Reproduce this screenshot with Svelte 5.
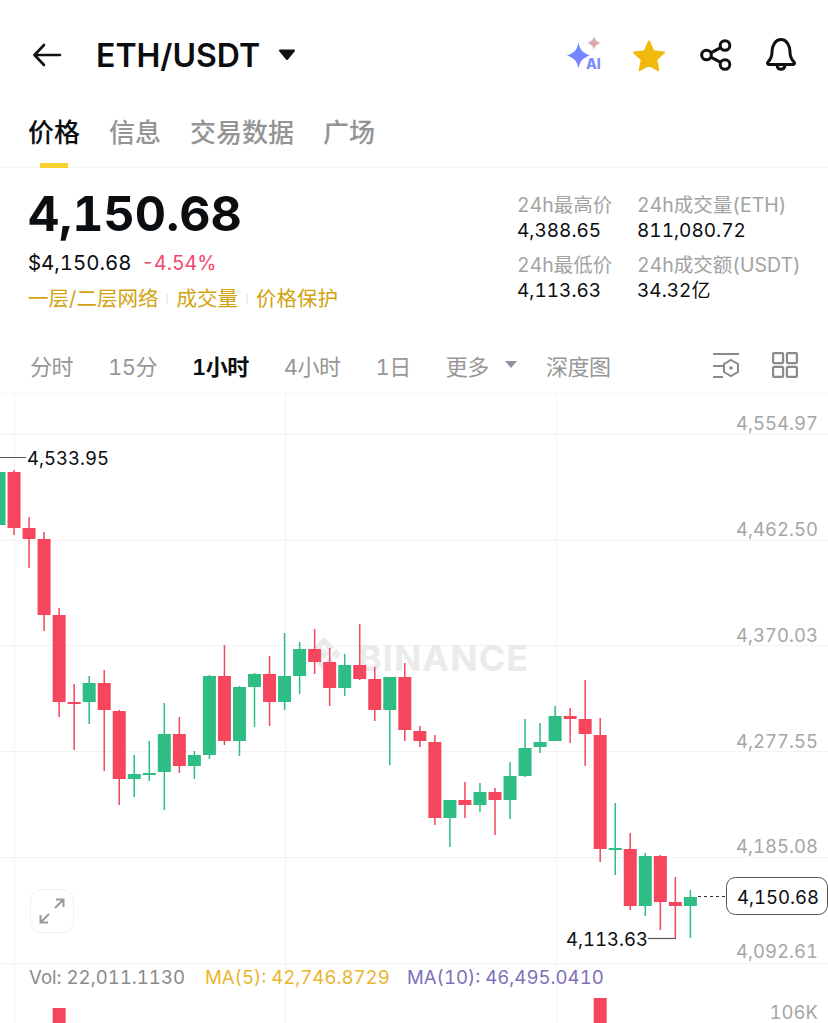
<script>
  const RED = '#f6465d'
  const GREEN = '#2ebd85'

  // [body top, body bottom, wick top, wick bottom, up?]
  const candles = [
    [472, 525, 470, 527, 1],
    [472, 528, 470, 535, 0],
    [528, 539, 517, 568, 0],
    [539, 615, 532, 631, 0],
    [615, 702, 608, 717, 0],
    [702, 704, 684, 750, 0],
    [683, 702, 676, 724, 1],
    [683, 710, 670, 771, 0],
    [711, 779, 710, 805, 0],
    [774, 779, 755, 797, 1],
    [773, 774, 741, 781, 1],
    [734, 772, 703, 810, 1],
    [734, 766, 717, 773, 0],
    [755, 766, 751, 779, 1],
    [676, 755, 675, 759, 1],
    [676, 741, 645, 745, 0],
    [687, 741, 686, 756, 1],
    [674, 687, 673, 727, 1],
    [674, 702, 656, 726, 0],
    [676, 702, 633, 710, 1],
    [649, 676, 642, 694, 1],
    [649, 662, 629, 674, 0],
    [662, 688, 648, 706, 0],
    [665, 688, 654, 696, 1],
    [665, 679, 624, 680, 0],
    [679, 710, 667, 721, 0],
    [677, 710, 677, 765, 1],
    [677, 730, 663, 741, 0],
    [731, 741, 726, 747, 0],
    [742, 818, 735, 825, 0],
    [800, 818, 800, 847, 1],
    [800, 805, 782, 818, 0],
    [792, 805, 783, 812, 1],
    [792, 800, 788, 835, 0],
    [776, 800, 762, 819, 1],
    [748, 776, 719, 777, 1],
    [742, 747, 723, 753, 1],
    [716, 741, 706, 741, 1],
    [716, 719, 708, 743, 0],
    [719, 734, 680, 766, 0],
    [735, 849, 718, 862, 0],
    [848, 849, 803, 875, 1],
    [849, 906, 833, 910, 0],
    [856, 906, 853, 916, 1],
    [856, 902, 855, 930, 0],
    [902, 906, 877, 938, 0],
    [897, 906, 890, 938, 1]
  ]

  const slot = (i) => -1 + 15.03 * i

  const gridY = [434, 540, 645, 751, 857, 963]
  const gridX = [14, 285, 556]
  const axis = [
    ['4,554.97', 430],
    ['4,462.50', 536],
    ['4,370.03', 642],
    ['4,277.55', 748],
    ['4,185.08', 853],
    ['4,092.61', 958],
    ['106K', 1019]
  ]

  const tabs = ['价格', '信息', '交易数据', '广场']
  const intervals = ['分时', '15分', '1小时', '4小时', '1日']
</script>

<div class="screen">
  <header class="topbar">
    <svg class="back" width="30" height="24" viewBox="0 0 30 24" fill="none" stroke="#111" stroke-width="2.6" stroke-linecap="round" stroke-linejoin="round">
      <path d="M28 12H3M12 2 2.500 12 12 22" />
    </svg>
    <span class="pair">ETH/USDT</span>
    <svg class="pair-caret" width="18" height="12" viewBox="0 0 18 12">
      <path d="M2 1.500h14L9 10z" fill="#111" stroke="#111" stroke-width="2" stroke-linejoin="round" />
    </svg>
    <div class="actions">
      <svg class="ai-icon" width="38" height="38" viewBox="0 0 38 38">
        <defs>
          <linearGradient id="ai-big" x1="0" y1="0" x2="1" y2="1">
            <stop offset="0" stop-color="#5f8dff" />
            <stop offset="1" stop-color="#8b7bff" />
          </linearGradient>
          <linearGradient id="ai-small" x1="0" y1="0" x2="1" y2="1">
            <stop offset="0" stop-color="#c9a6e8" />
            <stop offset="1" stop-color="#f2a77c" />
          </linearGradient>
        </defs>
        <path d="M13.500 6.500c1.500 7.500 3.800 10 11.500 13-7.700 3-10 5.500-11.500 13-1.500-7.500-3.800-10-11.500-13 7.700-3 10-5.500 11.500-13z" fill="url(#ai-big)" />
        <path d="M29 0c.8 3.800 2.200 5.400 7 7-4.800 1.600-6.200 3.200-7 7-.8-3.800-2.200-5.400-7-7 4.800-1.600 6.200-3.200 7-7z" fill="url(#ai-small)" />
        <text class="ai" x="21" y="33">AI</text>
      </svg>
      <svg class="star" width="36" height="34" viewBox="0 0 36 34">
        <path d="M18 3.500l4.400 9.800 10.600 1.200-7.800 7.200 2.100 10.500-9.300-5.300-9.300 5.300 2.100-10.500L3 14.500l10.600-1.200z" fill="#f0b90b" stroke="#f0b90b" stroke-width="2" stroke-linejoin="round" />
      </svg>
      <svg class="share" width="34" height="32" viewBox="0 0 34 32" fill="none" stroke="#111" stroke-width="3">
        <circle cx="7.500" cy="16" r="4.800" />
        <circle cx="26" cy="6.500" r="4.800" />
        <circle cx="26" cy="25.500" r="4.800" />
        <path d="M11.800 13.800 21.700 8.700M11.800 18.200l9.900 5.100" />
      </svg>
      <svg class="bell" width="32" height="36" viewBox="0 0 32 36" fill="none" stroke="#111" stroke-width="3" stroke-linejoin="round" stroke-linecap="round">
        <path d="M7 15c0-6.500 3.500-12.500 9-12.500S25 8.500 25 15c0 5 1.500 7.500 4 10 1 1 .6 2.500-1 2.500H4c-1.600 0-2-1.500-1-2.500 2.500-2.500 4-5 4-10z" />
        <path d="M12 28c.3 2.800 2 4.300 4 4.300s3.700-1.500 4-4.300" />
      </svg>
    </div>
  </header>

  <nav class="tabs">
    {#each tabs as tab, i}
      <span class="tab" class:active={i === 0}>{tab}</span>
    {/each}
  </nav>

  <section class="summary">
    <div class="price-block">
      <div class="price">4,150.68</div>
      <div class="sub">
        <span>$4,150.68</span>
        <span class="change">-4.54%</span>
      </div>
      <div class="tags">
        <span>一层/二层网络</span>
        <i></i>
        <span>成交量</span>
        <i></i>
        <span>价格保护</span>
      </div>
    </div>
    <dl class="stats">
      <div><dt>24h最高价</dt><dd>4,388.65</dd></div>
      <div><dt>24h成交量(ETH)</dt><dd>811,080.72</dd></div>
      <div><dt>24h最低价</dt><dd>4,113.63</dd></div>
      <div><dt>24h成交额(USDT)</dt><dd>34.32亿</dd></div>
    </dl>
  </section>

  <div class="intervals">
    {#each intervals as item}
      <span class:current={item === '1小时'}>{item}</span>
    {/each}
    <span class="more">更多<svg width="14" height="9" viewBox="0 0 14 9"><path d="M1 1h12L7 8z" fill="#8d949e" /></svg></span>
    <span class="depth">深度图</span>
    <div class="tools">
      <svg width="28" height="26" viewBox="0 0 28 26" fill="none" stroke="#8a8a8a" stroke-width="2">
        <path d="M1 2h26M1 14h11M1 25h10" />
        <path d="M19 8l7 4v8l-7 4-7-4v-8z" />
        <circle cx="19" cy="16" r="1.800" fill="#8a8a8a" stroke="none" />
      </svg>
      <svg width="26" height="26" viewBox="0 0 26 26" fill="none" stroke="#8a8a8a" stroke-width="2.200">
        <rect x="1.100" y="1.100" width="10" height="10" rx="1" />
        <rect x="14.900" y="1.100" width="10" height="10" rx="1" />
        <rect x="1.100" y="14.900" width="10" height="10" rx="1" />
        <rect x="14.900" y="14.900" width="10" height="10" rx="1" />
      </svg>
    </div>
  </div>

  <div class="chart">
    <svg width="828" height="629" viewBox="0 394 828 629">
      {#each gridX as x}
        <line x1={x + 0.5} x2={x + 0.5} y1="394" y2="1023" class="grid" />
      {/each}
      {#each gridY as y}
        <line x1="0" x2="828" y1={y + 0.5} y2={y + 0.5} class="grid" />
      {/each}

      <path d="M324 637l10 10-4 4-6-6-6 6-4-4zM324 671l-10-10 4-4 6 6 6-6 4 4zM324 649l5 5-5 5-5-5zM312 649l5 5-5 5-5-5zM336 649l5 5-5 5-5-5z" fill="#ebebeb" />
      <text class="watermark" x="358" y="671">BINANCE</text>

      {#each candles as [top, bottom, wickTop, wickBottom, up], i}
        {@const c = up ? GREEN : RED}
        <rect x={slot(i) - 0.75} y={wickTop} width="1.500" height={wickBottom - wickTop} fill={c} />
        <rect x={slot(i) - 6.500} y={top} width="13" height={Math.max(bottom - top, 2)} fill={c} />
      {/each}

      <rect x={slot(4) - 6.500} y="1008" width="13" height="15" fill={RED} />
      <rect x={slot(40) - 6.500} y="998" width="13" height="25" fill={RED} />

      {#each axis as [label, y]}
        <text class="axis" x="818" {y}>{label}</text>
      {/each}

      <line x1="0" x2="26" y1="457.500" y2="457.500" stroke="#555" />
      <text class="mark" x="27" y="465">4,533.95</text>

      <path d="M648 938.500h28" stroke="#555" stroke-width="1.200" fill="none" />
      <text class="mark" x="566" y="946">4,113.63</text>

      <line x1="698" x2="725" y1="896.500" y2="896.500" stroke="#333" stroke-dasharray="3 3" />
      <rect x="726.500" y="877.500" width="101" height="37" rx="9" fill="#fff" stroke="#555" />
      <text class="mark" x="737" y="904">4,150.68</text>

      <text class="legend" x="29" y="984">
        <tspan fill="#8a8a8a">Vol: 22,011.1130</tspan>
        <tspan x="205" fill="#eab52e">MA(5): 42,746.8729</tspan>
        <tspan x="407" fill="#7f70bb">MA(10): 46,495.0410</tspan>
      </text>
    </svg>

    <button class="expand" aria-label="expand">
      <svg width="28" height="28" viewBox="0 0 28 28" fill="none" stroke="#9a9a9a" stroke-width="2">
        <path d="M17 11l8-8M18 2.500h7.500V10M11 17l-8 8M2.500 18v7.500H10" />
      </svg>
    </button>
  </div>
</div>

<style>
  :global(body) {
    background: #fff;
    font-family: Inter, 'Noto Sans CJK SC', sans-serif;
    font-variant-numeric: tabular-nums;
  }

  .screen {
    width: 828px;
    height: 1023px;
    overflow: hidden;
    color: #0b0e11;
  }

  .topbar {
    display: flex;
    align-items: center;
    height: 110px;
    padding: 0 31px 0 32px;
    box-sizing: border-box;
  }
  .pair {
    margin-left: 34px;
    font-size: 32px;
    font-weight: 600;
    font-variant-numeric: normal;
  }
  .pair-caret {
    margin-left: 18px;
  }
  .actions {
    display: flex;
    align-items: center;
    gap: 32px;
    margin-left: auto;
  }
  .ai-icon {
    margin-right: -4px;
    overflow: visible;
  }
  .ai {
    font-size: 14px;
    font-weight: 800;
    fill: #7d8cf8;
  }

  .tabs {
    display: flex;
    gap: 29px;
    height: 58px;
    padding-left: 28px;
    box-sizing: border-box;
    border-bottom: 1px solid #f5f5f5;
  }
  .tab {
    position: relative;
    font-size: 26px;
    font-weight: 500;
    line-height: 46px;
    color: #949494;
  }
  .tab.active {
    color: #0b0e11;
  }
  .tab.active::after {
    content: '';
    position: absolute;
    left: 12px;
    bottom: -1px;
    width: 28px;
    height: 5px;
    background: #f8d12f;
  }

  .summary {
    display: flex;
    justify-content: space-between;
    height: 172px;
    padding: 17px 0 0 28px;
    box-sizing: border-box;
  }
  .price {
    font-size: 48.4px;
    font-weight: 700;
    line-height: 58px;
  }
  .sub {
    display: flex;
    align-items: baseline;
    gap: 10px;
    margin-top: 6px;
    font-size: 20.4px;
    line-height: 28px;
  }
  .change {
    font-size: 19.5px;
    color: #f0486a;
  }
  .tags {
    display: flex;
    align-items: center;
    gap: 8px;
    margin-top: 8px;
    font-size: 20.5px;
    line-height: 28px;
    color: #d3a20f;
  }
  .tags i {
    width: 2px;
    height: 10px;
    background: #eee;
  }
  .stats {
    display: grid;
    grid-template-columns: 120px 191px;
    row-gap: 8px;
    align-self: flex-start;
    margin: 7px 0 0;
    font-size: 19.5px;
    line-height: 26px;
  }
  .stats dt {
    color: #a3a3a3;
  }
  .stats dd {
    margin: 0;
    font-size: 19px;
    color: #0b0e11;
  }

  .intervals {
    display: flex;
    align-items: center;
    gap: 35px;
    height: 54px;
    padding: 0 30px 4px 30px;
    box-sizing: border-box;
    font-size: 22px;
    letter-spacing: -0.5px;
    color: #979797;
    border-bottom: 1px solid #f5f5f5;
  }
  .intervals .current {
    color: #0b0e11;
    font-weight: 600;
  }
  .more {
    display: flex;
    align-items: center;
    gap: 15px;
  }
  .depth {
    margin-left: -7px;
  }
  .tools {
    display: flex;
    align-items: center;
    gap: 32px;
    margin-left: auto;
  }

  .chart {
    position: relative;
    height: 629px;
  }
  .chart > svg {
    display: block;
  }
  .grid {
    stroke: #f3f3f3;
    stroke-width: 1;
  }
  .watermark {
    font-size: 36px;
    font-weight: 700;
    letter-spacing: 1px;
    fill: #ebebeb;
  }
  .axis {
    font-size: 18.5px;
    fill: #a6a6a6;
    text-anchor: end;
  }
  .mark {
    font-size: 18.5px;
    fill: #0b0e11;
  }
  .legend {
    font-size: 18.6px;
  }

  .expand {
    position: absolute;
    left: 30px;
    top: 495px;
    width: 44px;
    height: 44px;
    display: flex;
    align-items: center;
    justify-content: center;
    padding: 0;
    background: #fff;
    border: 1.500px solid #efefef;
    border-radius: 11px;
  }
</style>
